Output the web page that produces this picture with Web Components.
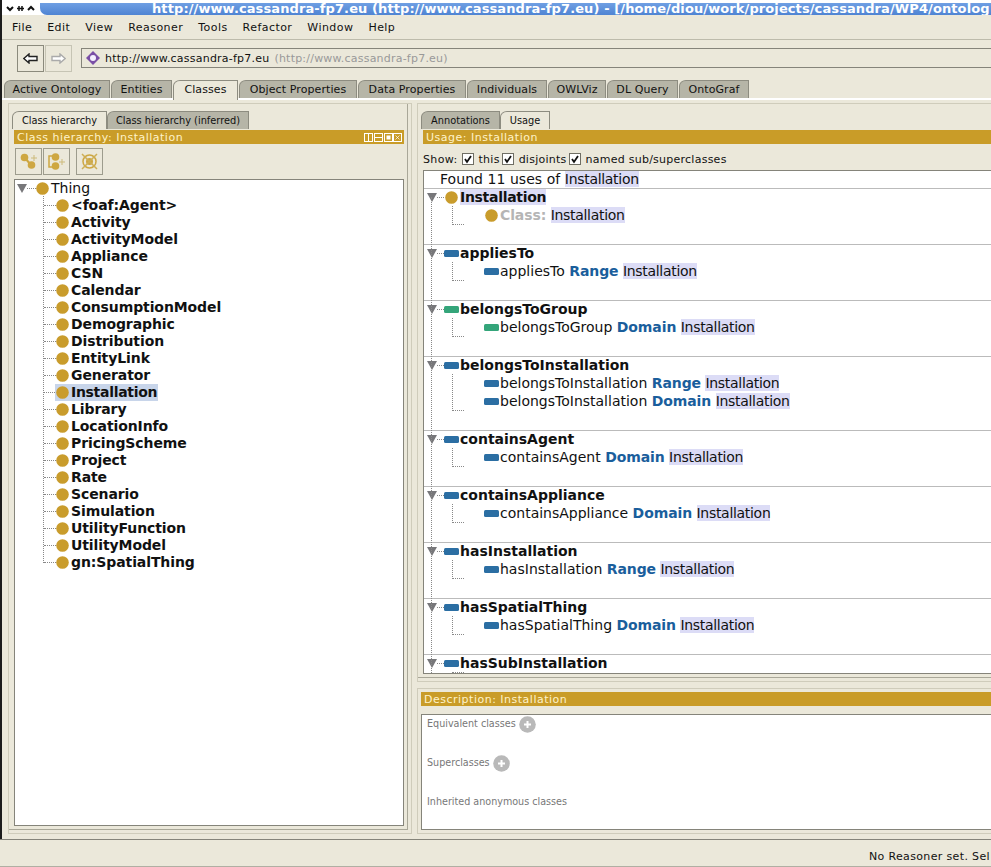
<!DOCTYPE html>
<html>
<head>
<meta charset="utf-8">
<title>Protege</title>
<style>
  html, body { margin: 0; height: 867px; overflow: hidden; background: #ebe8da; }
  body { font: 11px "DejaVu Sans", sans-serif; color: #111; }
  .top { border-left: 2px solid #1c1c1c; height: 839px; box-sizing: border-box; overflow: hidden; }
  .panes { display: grid; grid-template-columns: 412px 700px; margin-left: -2px; }
  .side { display: flex; flex-direction: column; }
</style>
</head>
<body>
<div class="top">
  <pv-titlebar>http://www.cassandra-fp7.eu (http://www.cassandra-fp7.eu) - [/home/diou/work/projects/cassandra/WP4/ontolog</pv-titlebar>
  <pv-menubar><span>File</span><span>Edit</span><span>View</span><span>Reasoner</span><span>Tools</span><span>Refactor</span><span>Window</span><span>Help</span></pv-menubar>
  <pv-toolbar>http://www.cassandra-fp7.eu</pv-toolbar>
  <pv-tabs>
    <pv-tab style="width:106px">Active Ontology</pv-tab>
    <pv-tab style="width:61px">Entities</pv-tab>
    <pv-tab style="width:65px" selected>Classes</pv-tab>
    <pv-tab style="width:118px">Object Properties</pv-tab>
    <pv-tab style="width:108px">Data Properties</pv-tab>
    <pv-tab style="width:80px">Individuals</pv-tab>
    <pv-tab style="width:58px">OWLViz</pv-tab>
    <pv-tab style="width:71px">DL Query</pv-tab>
    <pv-tab style="width:70px">OntoGraf</pv-tab>
  </pv-tabs>
  <div class="panes">
    <pv-frame style="margin-left:8px;height:731px">
      <pv-subtabs>
        <pv-tab small selected style="width:95px">Class hierarchy</pv-tab>
        <pv-tab small style="width:142px">Class hierarchy (inferred)</pv-tab>
      </pv-subtabs>
      <pv-viewbar buttons>Class hierarchy: Installation</pv-viewbar>
      <pv-treetools></pv-treetools>
      <class-tree>
        <tree-root>Thing</tree-root>
        <tree-kids>
          <tree-node>&lt;foaf:Agent&gt;</tree-node>
          <tree-node>Activity</tree-node>
          <tree-node>ActivityModel</tree-node>
          <tree-node>Appliance</tree-node>
          <tree-node>CSN</tree-node>
          <tree-node>Calendar</tree-node>
          <tree-node>ConsumptionModel</tree-node>
          <tree-node>Demographic</tree-node>
          <tree-node>Distribution</tree-node>
          <tree-node>EntityLink</tree-node>
          <tree-node>Generator</tree-node>
          <tree-node selected>Installation</tree-node>
          <tree-node>Library</tree-node>
          <tree-node>LocationInfo</tree-node>
          <tree-node>PricingScheme</tree-node>
          <tree-node>Project</tree-node>
          <tree-node>Rate</tree-node>
          <tree-node>Scenario</tree-node>
          <tree-node>Simulation</tree-node>
          <tree-node>UtilityFunction</tree-node>
          <tree-node>UtilityModel</tree-node>
          <tree-node>gn:SpatialThing</tree-node>
        </tree-kids>
      </class-tree>
    </pv-frame>
    <div class="side">
      <pv-frame right style="height:579px">
        <pv-subtabs>
          <pv-tab small style="width:79px">Annotations</pv-tab>
          <pv-tab small selected style="width:50px">Usage</pv-tab>
        </pv-subtabs>
        <pv-viewbar>Usage: Installation</pv-viewbar>
        <usage-show></usage-show>
        <usage-list>
          <usage-section kind="class" name="Installation" hl>
            <usage-line kind="class" deep><b class="c">Class:</b> <mark>Installation</mark></usage-line>
          </usage-section>
          <usage-section kind="object" name="appliesTo">
            <usage-line kind="object">appliesTo <b>Range</b> <mark>Installation</mark></usage-line>
          </usage-section>
          <usage-section kind="data" name="belongsToGroup">
            <usage-line kind="data">belongsToGroup <b>Domain</b> <mark>Installation</mark></usage-line>
          </usage-section>
          <usage-section kind="object" name="belongsToInstallation">
            <usage-line kind="object">belongsToInstallation <b>Range</b> <mark>Installation</mark></usage-line>
            <usage-line kind="object">belongsToInstallation <b>Domain</b> <mark>Installation</mark></usage-line>
          </usage-section>
          <usage-section kind="object" name="containsAgent">
            <usage-line kind="object">containsAgent <b>Domain</b> <mark>Installation</mark></usage-line>
          </usage-section>
          <usage-section kind="object" name="containsAppliance">
            <usage-line kind="object">containsAppliance <b>Domain</b> <mark>Installation</mark></usage-line>
          </usage-section>
          <usage-section kind="object" name="hasInstallation">
            <usage-line kind="object">hasInstallation <b>Range</b> <mark>Installation</mark></usage-line>
          </usage-section>
          <usage-section kind="object" name="hasSpatialThing">
            <usage-line kind="object">hasSpatialThing <b>Domain</b> <mark>Installation</mark></usage-line>
          </usage-section>
          <usage-section kind="object" name="hasSubInstallation"></usage-section>
        </usage-list>
      </pv-frame>
      <pv-frame lower style="height:146px">
        <pv-viewbar>Description: Installation</pv-viewbar>
        <class-description>
          <desc-group add>Equivalent classes</desc-group>
          <desc-group add>Superclasses</desc-group>
          <desc-group>Inherited anonymous classes</desc-group>
        </class-description>
      </pv-frame>
    </div>
  </div>
</div>
<pv-statusbar>No Reasoner set. Sel</pv-statusbar>

<script>
const ICONS = {
  cls: '<svg width="13" height="13" viewBox="0 0 13 13"><circle cx="6.5" cy="6.5" r="6.3" fill="#c99c2c"/></svg>',
  object: '<svg width="15" height="7" viewBox="0 0 15 7"><rect width="15" height="7" rx="1.5" fill="#2b6ea3"/></svg>',
  data: '<svg width="15" height="7" viewBox="0 0 15 7"><rect width="15" height="7" rx="1.5" fill="#34a57a"/></svg>',
  open: '<svg width="10" height="9" viewBox="0 0 10 9"><path d="M0 0H10L5 9Z" fill="#77777a"/></svg>'
};
ICONS.class = ICONS.cls;

function component(name, css, html) {
  customElements.define(name, class extends HTMLElement {
    constructor() {
      super();
      const shadow = this.attachShadow({ mode: 'open' });
      shadow.innerHTML = `<style>${css}</style>${typeof html === 'function' ? html(this) : html}`;
    }
  });
}

component('pv-titlebar', `
  :host { display: flex; height: 15px; background: #fff; overflow: hidden; }
  .btns { width: 38px; flex: none; display: flex; align-items: center; padding-top: 1px; }
  .bar { flex: 1; margin-top: 3px; height: 12px; background: linear-gradient(#6f9fe3, #4f84d3); border-bottom-left-radius: 7px;
         color: #fff; font: bold 13px/11px "DejaVu Sans", sans-serif; white-space: nowrap; padding-left: 112px; overflow: hidden; letter-spacing: .1px; }
`, `<div class="btns"><svg width="38" height="12" viewBox="0 0 38 12"><path d="M5 5l3 3 3-3" fill="none" stroke="#111" stroke-width="2"/><path d="M15 6.5h7M17 4v5M20 4v5" fill="none" stroke="#111" stroke-width="1.5"/><path d="M26 8l3-3 3 3" fill="none" stroke="#111" stroke-width="2"/></svg></div><div class="bar"><slot></slot></div>`);

component('pv-menubar', `
  :host { display: flex; height: 24px; border-bottom: 1px solid #bdbbab; padding-left: 10px; align-items: center; gap: 15px; letter-spacing: .45px; }
`, `<slot></slot>`);

component('pv-toolbar', `
  :host { display: flex; height: 40px; box-sizing: border-box; padding: 5px 0 0 15px; }
  .btn { width: 27px; height: 27px; box-sizing: border-box; border: 1px solid #8b8a7c; display: flex; align-items: center; justify-content: center; }
  .btn + .btn { margin-left: 1px; border-color: #c6c4b4; }
  .addr { flex: 1; margin: 3px 0 0 9px; height: 20px; box-sizing: border-box; border: solid #85847a; border-width: 1px 0 1px 1px;
          display: flex; align-items: center; gap: 5px; padding-left: 4px; letter-spacing: .22px; white-space: nowrap; }
  .addr i { font-style: normal; color: #999; }
`, `<div class="btn"><svg width="15" height="11" viewBox="0 0 15 11"><path d="M.8 5.5L6 1v2.500h8v4H6V10Z" fill="#fff" stroke="#222" stroke-width="1.400"/></svg></div>
<div class="btn"><svg width="15" height="11" viewBox="0 0 15 11"><path d="M14.200 5.500L9 1v2.500H1v4h8V10Z" fill="#fff" stroke="#aaa" stroke-width="1.400"/></svg></div>
<div class="addr"><svg width="14" height="14" viewBox="0 0 14 14"><path d="M7 0L14 7L7 14L0 7Z" fill="#7a4fa6"/><circle cx="7" cy="7" r="3" fill="#f5f0ff"/></svg><span><slot></slot></span> <i>(http://www.cassandra-fp7.eu)</i></div>`);

component('pv-tabs', `
  :host { display: flex; padding-left: 2px; box-sizing: border-box; gap: 1px; border-bottom: 2px solid #fff; height: 20px; }
`, `<slot></slot>`);

component('pv-subtabs', `
  :host { display: flex; height: 18px; margin-left: -2px; }
`, `<slot></slot>`);

component('pv-tab', `
  :host { display: flex; align-items: center; justify-content: center; box-sizing: border-box; height: 18px; background: #b6b5a7; color: #111; letter-spacing: .1px;
          border: 1px solid #8d8c80; border-bottom: 0; border-top-left-radius: 7px 6px; white-space: nowrap; flex: none; }
  :host([selected]) { background: #ebe8da; height: 20px; padding-bottom: 2px; z-index: 1; }
  :host([small]) { font-size: 9.8px; letter-spacing: 0; height: 18px; padding-bottom: 1px; }
`, `<slot></slot>`);

component('pv-frame', `
  :host { display: block; box-sizing: border-box; border: 1px solid #cfccbb; padding: 7px 7px 0 5px; overflow: hidden; margin-top: 3px;
          box-shadow: inset -3px -3px 0 #ebe8da, inset -4px -4px 0 #a9a798; }
  :host([right]) { margin-left: 5px; border-right: 0; padding: 7px 0 0 5px; box-shadow: inset 0 -3px 0 #ebe8da, inset 0 -4px 0 #a9a798; }
  :host([lower]) { margin: 6px 0 0 5px; border-right: 0; padding: 2px 0 0 3px; box-shadow: none; }
`, `<slot></slot>`);

component('pv-viewbar', `
  :host { display: flex; align-items: center; justify-content: space-between; height: 14px; margin-top: 1px; background: #c99c28; color: #fff3c8; padding: 0 2px 0 3px; letter-spacing: .5px; box-sizing: border-box; white-space: nowrap; }
  svg { display: block; }
`, el => `<span><slot></slot></span>` + (el.hasAttribute('buttons') ? `<svg width="38" height="9" viewBox="0 0 38 9" fill="none" stroke="#fff"><rect x=".5" y=".5" width="8" height="8"/><path d="M4.500 1v7"/><rect x="10.500" y=".5" width="8" height="8"/><path d="M11 4.500h7"/><rect x="20.500" y=".5" width="8" height="8"/><rect x="23" y="3" width="3" height="3" fill="#fff"/><rect x="29.500" y=".5" width="8" height="8"/><path d="M31.500 2.500l4 4M35.500 2.500l-4 4" stroke-width=".7"/></svg>` : ''));

component('pv-treetools', `
  :host { display: flex; height: 27px; margin: 4px 0 4px 1px; }
  .b { width: 27px; height: 27px; box-sizing: border-box; border: 1px solid #9d9c8d; display: flex; align-items: center; justify-content: center; margin-right: 1px; }
  .b.x { margin-left: 5px; }
  svg { opacity: .85; }
`, `<div class="b"><svg width="19" height="19" viewBox="0 0 19 19"><path d="M6 6L12 13" stroke="#c99c28" stroke-width="2"/><circle cx="5.500" cy="5.500" r="3.800" fill="#c99c28"/><circle cx="12.500" cy="13" r="3.800" fill="#c99c28"/><path d="M15 3v6M12 6h6" stroke="#c9b46a" stroke-width="1"/></svg></div>
<div class="b"><svg width="19" height="19" viewBox="0 0 19 19"><path d="M6 4H2V15H6" fill="none" stroke="#c99c28" stroke-width="1.500"/><circle cx="8.500" cy="5" r="3.800" fill="#c99c28"/><circle cx="8.500" cy="14" r="3.800" fill="#c99c28"/><path d="M15 7v6M12 10h6" stroke="#c9b46a" stroke-width="1"/></svg></div>
<div class="b x"><svg width="19" height="19" viewBox="0 0 19 19"><circle cx="9.500" cy="9.500" r="6.500" fill="none" stroke="#c99c28" stroke-width="1.500"/><circle cx="9.500" cy="9.500" r="3.500" fill="#c99c28"/><path d="M2 2L17 17M17 2L2 17" stroke="#c9a640" stroke-width="1.500"/></svg></div>`);

component('class-tree', `
  :host { display: block; height: 647px; background: #fff; border: 1px solid #85847a; box-sizing: border-box; width: 390px; font: 14px/17px "DejaVu Sans", sans-serif; }
`, `<slot></slot>`);

component('tree-root', `
  :host { display: flex; align-items: center; height: 17px; padding-left: 2px; position: relative; }
  .dots { width: 9px; border-top: 1px dotted #888; }
  svg { flex: none; display: block; }
  .i { margin-right: 2px; }
`, () => `${ICONS.open}<span class="dots"></span><span class="i">${ICONS.cls}</span><slot></slot>`);

component('tree-kids', `
  :host { display: block; position: relative; padding-left: 41px; }
  :host::before { content: ""; position: absolute; left: 28px; top: -1px; bottom: 8px; border-left: 1px dotted #888; }
`, `<slot></slot>`);

component('tree-node', `
  :host { display: flex; align-items: center; height: 17px; width: fit-content; font-weight: bold; position: relative; letter-spacing: -.1px; white-space: nowrap; }
  :host::before { content: ""; position: absolute; left: -12px; width: 12px; top: 8px; border-top: 1px dotted #888; }
  svg { display: block; flex: none; }
  .i { margin-right: 2px; }
  .t { padding-right: 1px; }
  :host([selected]) { background: #c8d5ea; letter-spacing: -.3px; margin-left: -1px; padding-left: 1px; }
`, () => `<span class="i">${ICONS.cls}</span><span class="t"><slot></slot></span>`);

component('usage-show', `
  :host { display: flex; align-items: center; height: 26px; padding: 4px 0 0 0; box-sizing: border-box; letter-spacing: .25px; white-space: nowrap; }
  .c { width: 12px; height: 12px; box-sizing: border-box; border: 1px solid #6f6e64; background: #fff; display: inline-flex; align-items: center; justify-content: center; flex: none; }
  .l { margin: 0 2px 0 5px; }
  svg { display: block; }
`, () => {
  const box = '<i class="c"><svg width="10" height="10" viewBox="0 0 10 10"><path d="M2 5L4 8L8 2" fill="none" stroke="#111" stroke-width="1.800"/></svg></i>';
  return `<span style="margin-right:4px;letter-spacing:.35px">Show:</span>${box}<span class="l">this</span>${box}<span class="l">disjoints</span>${box}<span class="l">named sub/superclasses</span>`;
});

component('usage-list', `
  :host { display: block; height: 504px; overflow: hidden; background: #fff; border: 1px solid #85847a; border-right: 0; box-sizing: border-box; position: relative; font: 14px "DejaVu Sans", sans-serif; }
  .found { height: 17px; line-height: 17px; padding-left: 16px; letter-spacing: .05px; }
  mark { background: #dcdcf6; color: inherit; letter-spacing: -.3px; }
  .vline { position: absolute; left: 7px; top: 26px; bottom: 0; border-left: 1px dotted #888; }
`, `<div class="found">Found 11 uses of <mark>Installation</mark></div><slot></slot><div class="vline"></div>`);

component('usage-section', `
  :host { display: block; position: relative; border-top: 1px solid #bbb; padding-bottom: 20px; }
  .h { height: 16px; margin-bottom: 1px; display: flex; align-items: center; padding-left: 3px; font-weight: bold; white-space: nowrap; }
  .dots { width: 7px; border-top: 1px dotted #888; flex: none; }
  .h svg { display: block; flex: none; }
  .nm { margin-left: 1px; }
  .nm.hl { background: #dcdcf6; letter-spacing: -.3px; margin-left: 2px; }
  .ic { margin-left: 1px; }
  .wire { position: absolute; left: 28px; top: 17px; bottom: 19px; width: 11px; border-left: 1px dotted #888; border-bottom: 1px dotted #888; }
`, el => {
  const kind = el.getAttribute('kind');
  const n = el.getAttribute('name');
  const hl = el.hasAttribute('hl');
  return `<div class="h">${ICONS.open}<span class="dots"></span><span class="${hl ? 'ic' : ''}">${ICONS[kind]}</span><span class="nm ${hl ? 'hl' : ''}">${n}</span></div><slot></slot><div class="wire"></div>`;
});

component('usage-line', `
  :host { display: flex; align-items: center; height: 18px; padding-left: 60px; white-space: pre; }
  :host([deep]) { padding-left: 61px; }
  :host([deep]) .i { margin-right: 2px; }
  svg { display: block; flex: none; }
  ::slotted(b) { color: #1a5e9c; letter-spacing: -.1px; }
  ::slotted(b.c) { color: #b5b5b5; }
  ::slotted(mark) { background: #dcdcf6; color: inherit; letter-spacing: -.3px; }
  .i { margin-right: 1px; }
`, el => `<span class="i">${ICONS[el.getAttribute('kind')]}</span><span><slot></slot></span>`);

component('class-description', `
  :host { display: block; height: 116px; margin-top: 8px; background: #fff; border: 1px solid #85847a; border-right: 0; box-sizing: border-box; padding-left: 5px; font-size: 9.6px; color: #777; }
`, `<slot></slot>`);

component('desc-group', `
  :host { display: flex; align-items: center; height: 17px; margin: 1px 0 22px; gap: 3px; }
  span { margin-bottom: 2px; }
  svg { display: block; }
`, el => `<span><slot></slot></span>` + (el.hasAttribute('add') ? `<svg width="17" height="17" viewBox="0 0 17 17"><circle cx="8.500" cy="8.500" r="8.300" fill="#b9b9b9"/><path d="M8.500 5v7M5 8.500h7" stroke="#fff" stroke-width="2"/></svg>` : ''));

component('pv-statusbar', `
  :host { display: flex; height: 28px; box-sizing: border-box; border-top: 1px solid #85847a; border-bottom: 1px solid #b0afa3; padding: 10px 0 0 869px; white-space: nowrap; overflow: hidden; letter-spacing: .35px; }
`, `<slot></slot>`);
</script>
</body>
</html>
